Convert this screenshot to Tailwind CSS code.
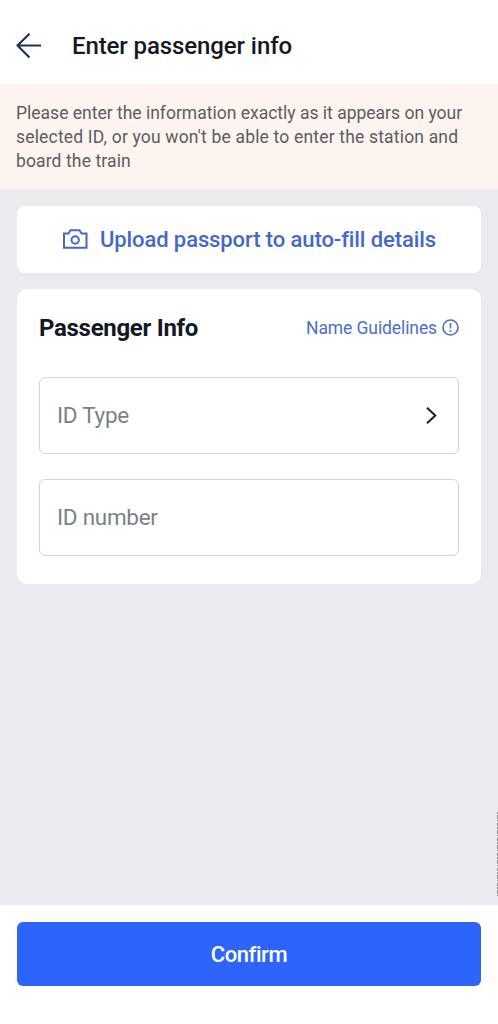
<!DOCTYPE html>
<html lang="en">
<head>
<meta charset="utf-8">
<title>Enter passenger info</title>
<script src="https://cdn.jsdelivr.net/npm/@tailwindcss/browser@4"></script>
</head>
<body class="bg-[#eaebef] font-['Roboto',sans-serif]">
<div class="relative flex h-screen w-full flex-col overflow-hidden">
  <header class="flex h-[84px] shrink-0 items-center bg-white pt-[7px] pl-4">
    <svg class="h-[26px] w-[26px] shrink-0" viewBox="0 0 26 26" fill="none" stroke="#1d3557" stroke-width="2.2" stroke-linejoin="round"><path d="M25 12.5H1.5M13.5 0.8L1.5 12.5L13.5 24.6"/></svg>
    <h1 class="ml-[30px] text-[24px] font-medium tracking-[-0.1px] text-[#15181f] whitespace-nowrap">Enter passenger info</h1>
  </header>
  <p class="h-[105px] shrink-0 bg-[#fdf4f0] pt-[17px] pl-4 text-[17.5px] leading-6 text-[#5b5c64] whitespace-nowrap"><span>Please enter the information exactly as it appears on your</span><br><span class="tracking-[0.18px]">selected ID, or you won't be able to enter the station and</span><br><span class="tracking-[0.12px]">board the train</span></p>
  <main class="grow px-[17px] pt-[17px]">
    <button class="flex h-[67px] w-full items-center rounded-lg bg-white pl-[46px] text-[22px] font-medium tracking-[-0.1px] text-[#4468cc] whitespace-nowrap">
      <svg class="mr-3 mb-[2px] h-5 w-[25px]" viewBox="0 0 25 20" fill="none" stroke="currentColor" stroke-width="2"><path d="M1 4.5H5.5L7.5 1.2H16.5L18.5 4.5H23.5V18.8H1Z"/><circle cx="12.2" cy="11" r="3.7"/></svg>
      <span>Upload passport to auto-fill details</span>
    </button>
    <section class="mt-4 h-[295px] rounded-[10px] bg-white px-[22px] pt-[23px]">
      <div class="flex h-8 items-center justify-between whitespace-nowrap">
        <h2 class="text-[24px] font-bold tracking-[-0.3px] text-[#141824]">Passenger Info</h2>
        <div class="flex items-center gap-[5px] text-[17.5px] tracking-[-0.1px] text-[#4b6fc7]"><span>Name Guidelines</span>
          <svg class="mb-[2px] h-[17px] w-[17px]" viewBox="0 0 17 17" fill="none" stroke="currentColor" stroke-width="1.6"><circle cx="8.5" cy="8.5" r="7.5"/><path d="M8.5 4V9.6M8.5 11.2V13"/></svg></div>
      </div>
      <div class="mt-[33px] flex h-[77px] items-center justify-between rounded-md border-[1.5px] border-[#d2d4d6] pr-[21px] pl-[17px] text-[22.5px] tracking-[-0.28px] text-[#7c8187]"><span>ID Type</span>
        <svg class="h-[17px] w-[11px]" viewBox="0 0 11 17" fill="none" stroke="#1b1d21" stroke-width="2"><path d="M1 0.8L9.3 8.5L1 16.2"/></svg></div>
      <div class="mt-[25px] flex h-[77px] items-center rounded-md border-[1.5px] border-[#d2d4d6] pl-[17px] text-[22.5px] tracking-[-0.28px] text-[#7c8187]"><span>ID number</span></div>
    </section>
  </main>
  <footer class="h-[119px] shrink-0 bg-white px-[17px] pt-[17px]">
    <button class="flex h-16 w-full items-center justify-center rounded-md bg-[#2d64fc] text-[22px] font-medium tracking-[-0.45px] text-white">Confirm</button>
  </footer>
  <svg class="absolute top-[812px] right-0 h-[84px] w-[2px]" viewBox="0 0 2 84" fill="none"><path d="M1.5 0V84" stroke="#8f9196" stroke-width="1" stroke-dasharray="2 1 4 1 1 2 3 1"/></svg>
</div>
</body>
</html>
